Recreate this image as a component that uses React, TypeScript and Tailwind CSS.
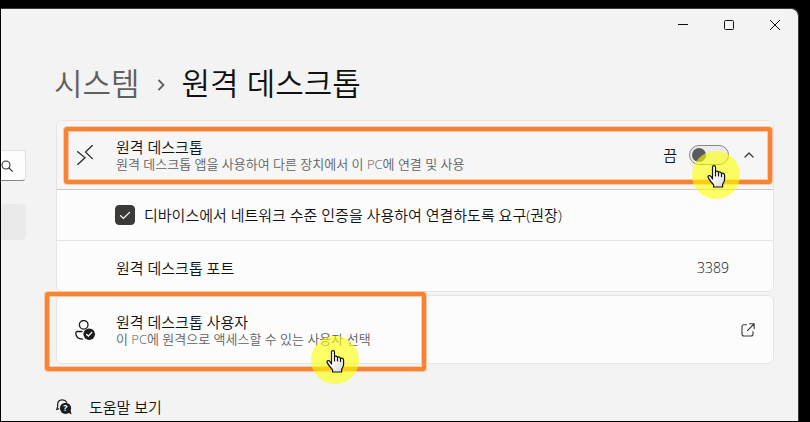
import React, { useState } from 'react';
import { ChevronUp } from 'lucide-react';

const RemoteIcon: React.FC = () => (
  <svg className="w-5 h-5" viewBox="0 0 20 20" fill="none" stroke="#2b2b2b" strokeWidth="1.3" strokeLinecap="round">
    <path d="M2.7 6.7 L10 12.7 L2.7 19.4" />
    <path d="M17.3 0.6 L10.5 6.9 L17.3 13.6" />
  </svg>
);

const UserCheckIcon: React.FC = () => (
  <svg className="w-5 h-5" viewBox="0 0 20 20" fill="none" stroke="#1b1b1b" strokeWidth="1.3" strokeLinecap="round">
    <circle cx="8.7" cy="4.8" r="4.3" />
    <path d="M7 11.5 H2.4 Q0.8 11.5 0.8 13.1 C0.8 16.8 3.6 19 7.6 19.2" />
    <circle cx="14.2" cy="14.2" r="5.8" fill="#1b1b1b" stroke="none" />
    <path d="M11.7 14.5 L13.4 16.1 L16.8 12.4" stroke="#fff" strokeWidth="1.4" />
  </svg>
);

const HelpIcon: React.FC = () => (
  <svg className="w-4 h-4" viewBox="0 0 16 16" fill="none" stroke="#1b1b1b" strokeWidth="1.2" strokeLinecap="round">
    <path d="M10.8 3.2 C9.6 1.2 7.6 0.7 6 0.8 C3.4 1 1.6 3 1.6 5.6 V6.6" />
    <path d="M1.8 6.9 L0.8 10.3 L2.6 9.8" />
    <circle cx="9.5" cy="9.3" r="5.6" fill="#1b1b1b" stroke="none" />
    <path d="M12 13.6 L15.6 15.4 L14.4 11 Z" fill="#1b1b1b" stroke="none" />
    <text x="9.5" y="12.4" textAnchor="middle" fill="#fff" stroke="none" fontSize="9" fontWeight="700">?</text>
  </svg>
);

const OpenIcon: React.FC = () => (
  <svg className="w-[14px] h-[14px]" viewBox="0 0 14 14" fill="none" stroke="#3a3a3a" strokeWidth="1.1" strokeLinecap="round" strokeLinejoin="round">
    <path d="M5.5 1.8 H3 Q1 1.8 1 3.8 V11 Q1 13 3 13 H10 Q12 13 12 11 V8.5" />
    <path d="M8.5 0.8 H13.2 V5.6 M13 1 L6.4 7.6" />
  </svg>
);

// yellow click marker with the hand pointer over it
const Pointer: React.FC<{ className: string }> = ({ className }) => (
  <div className={`absolute z-20 w-12 h-12 pointer-events-none ${className}`}>
    <div className="w-full h-full rounded-full bg-[#ffff00]/60"></div>
    <svg className="absolute left-[15px] top-[14px] w-[19px] h-[23px]" viewBox="0 0 19 23">
      <defs>
        <linearGradient id="hand-fill" x1="0" y1="0" x2="1" y2="1">
          <stop offset="0.4" stopColor="#ffffff" />
          <stop offset="1" stopColor="#d4d4d4" />
        </linearGradient>
      </defs>
      <path
        d="M5.5 14 V2.2 Q5.5 0.6 7 0.6 Q8.5 0.6 8.5 2.2 V6.6 Q10.2 5.4 11.5 7.2 Q13.4 6.4 14.4 8.2 Q17.6 7.8 17.6 10.6 V14 Q17.6 16.2 16.4 18 L15.6 19.6 V22 H6.6 V20 Q5.6 18.4 4.2 17 Q2.8 15.4 1.6 13.4 Q0.4 11.4 1.6 10.8 Q3 10.2 4.2 11.8 Z"
        fill="url(#hand-fill)"
        stroke="#111"
        strokeWidth="1.2"
        strokeLinejoin="round"
      />
      <path d="M8.5 6.6 V11 M11.5 7.4 V11 M14.5 8.4 V11.6" stroke="#111" strokeWidth="1.2" strokeLinecap="round" />
    </svg>
  </div>
);

const Highlight: React.FC<{ className: string }> = ({ className }) => (
  <div className={`absolute z-10 border-4 border-[#fa8231] rounded-[3px] pointer-events-none shadow-[0_0_0_1px_#fbcba8,inset_0_0_0_1px_#fbcba8] ${className}`}></div>
);

const App: React.FC = () => {
  const [enabled, setEnabled] = useState(false);
  const [nla, setNla] = useState(true);

  return (
    <div className="min-h-screen flex bg-black pt-2 pl-px pr-[11px] pb-px font-['Open_Sans','Noto_Sans_CJK_KR',sans-serif] font-[350] text-[15px] text-[#111]">
      <div className="flex-1 flex flex-col bg-[#f3f3f3] border-t border-r border-[#3a3a3a] rounded-tr-lg overflow-hidden">
        <header className="flex justify-end h-8">
          <button aria-label="최소화" className="w-[46px] flex items-center justify-center">
            <svg className="w-[10px] h-[10px]" viewBox="0 0 10 10" stroke="#111"><path d="M0 4.5 H10" /></svg>
          </button>
          <button aria-label="최대화" className="w-[46px] flex items-center justify-center">
            <svg className="w-[10px] h-[10px]" viewBox="0 0 10 10" fill="none" stroke="#111"><rect x="0.5" y="0.5" width="9" height="9" rx="1" /></svg>
          </button>
          <button aria-label="닫기" className="w-[46px] flex items-center justify-center">
            <svg className="w-[10px] h-[10px]" viewBox="0 0 10 10" stroke="#111"><path d="M0 0 L10 10 M10 0 L0 10" /></svg>
          </button>
        </header>

        <div className="flex-1 flex">
          <aside className="w-[25px] shrink-0 pt-[109px]">
            <button aria-label="설정 검색" className="w-full h-[31px] flex items-center bg-[#fdfdfd] border border-l-0 border-[#e2e2e2] border-b-[#868686] rounded-r">
              <svg className="w-3 h-3" viewBox="0 0 12 12" fill="none" stroke="#333" strokeWidth="1.1" strokeLinecap="round">
                <circle cx="5" cy="5" r="4" />
                <path d="M8 8 L11.4 11.4" />
              </svg>
            </button>
            <div className="mt-[23px] h-9 bg-[#eaeaea] rounded-r"></div>
          </aside>

          <main className="flex-1 min-w-0 pl-[30px] pr-6">
            <nav className="flex items-center h-[79px] -ml-[2px] pt-1 text-[31px] leading-10">
              <a href="#system" className="text-[#5f5f5f]">시스템</a>
              <svg className="w-2 h-3 mx-[17px] mt-1" viewBox="0 0 8 12" fill="none" stroke="#5f5f5f" strokeWidth="1.8">
                <path d="M1.5 1 L6.5 6 L1.5 11" />
              </svg>
              <h1 className="font-[350]">원격 데스크톱</h1>
            </nav>

            <section className="relative bg-[#fcfcfc] border border-[#e5e5e5] rounded-md">
              <div className="flex items-center h-[69px] pl-[18px] pr-4 bg-[#f6f6f6] border-b border-[#c8c8c8] rounded-t-md">
                <RemoteIcon />
                <div className="flex-1 ml-[21px]">
                  <h2 className="font-[350] leading-[18px]">원격 데스크톱</h2>
                  <p className="text-[13px] leading-4 text-[#5f5f5f]">원격 데스크톱 앱을 사용하여 다른 장치에서 이 PC에 연결 및 사용</p>
                </div>
                <label className="flex items-center gap-3">
                  {enabled ? '켬' : '끔'}
                  <input
                    type="checkbox"
                    role="switch"
                    checked={enabled}
                    onChange={(e) => setEnabled(e.target.checked)}
                    className="appearance-none w-10 h-5 flex items-center px-[2px] rounded-full border border-[#868686] bg-[#ececec] before:w-[14px] before:h-[14px] before:rounded-full before:bg-[#5a5a5a] checked:justify-end"
                  />
                </label>
                <button aria-label="접기" className="ml-3">
                  <ChevronUp className="w-4 h-4" strokeWidth={1.8} color="#333" />
                </button>
              </div>
              <div className="flex items-center h-[51px] pl-[58px] border-b border-[#e5e5e5]">
                <label className="flex items-center gap-[9px]">
                  <span className="relative flex">
                    <input
                      type="checkbox"
                      checked={nla}
                      onChange={(e) => setNla(e.target.checked)}
                      className="appearance-none w-5 h-5 rounded border border-[#3b3a39] checked:bg-[#3b3a39]"
                    />
                    <svg className="absolute inset-0 w-5 h-5 pointer-events-none" viewBox="0 0 20 20" fill="none" stroke="#fff" strokeWidth="1.3" strokeLinecap="round">
                      <path d="M5.5 10.6 L8.4 13.4 L14.6 7.4" />
                    </svg>
                  </span>
                  디바이스에서 네트워크 수준 인증을 사용하여 연결하도록 요구(권장)
                </label>
              </div>
              <div className="flex items-center justify-between h-[50px] pt-1 pl-[59px] pr-11">
                <span>원격 데스크톱 포트</span>
                <span className="text-sm">3389</span>
              </div>
              <Highlight className="left-[7px] right-px top-[6px] h-[57px]" />
              <Pointer className="right-[33px] top-[30px]" />
            </section>

            <section className="relative mt-[3px] bg-[#fcfcfc] border border-[#e5e5e5] rounded-md">
              <a href="#users" className="flex items-center h-[67px] px-[18px]">
                <UserCheckIcon />
                <div className="flex-1 ml-[21px]">
                  <h2 className="font-[350] leading-[18px]">원격 데스크톱 사용자</h2>
                  <p className="text-[13px] leading-4 text-[#5f5f5f]">이 PC에 원격으로 액세스할 수 있는 사용자 선택</p>
                </div>
                <OpenIcon />
              </a>
              <Highlight className="-left-3 -top-1 w-[381px] h-[79px]" />
              <Pointer className="left-[254px] top-10" />
            </section>

            <a href="#help" className="mt-8 inline-flex items-center gap-[17px]">
              <HelpIcon />
              도움말 보기
            </a>
          </main>
        </div>
      </div>
    </div>
  );
};

export default App;
